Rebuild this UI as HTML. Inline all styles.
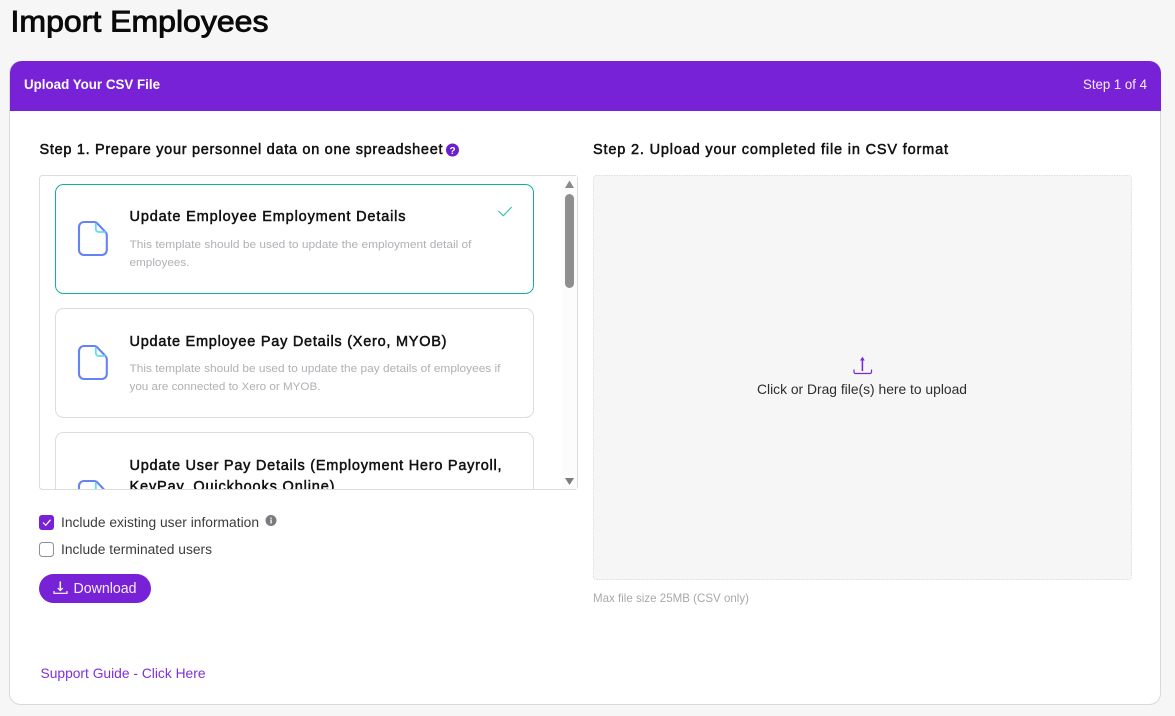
<!DOCTYPE html>
<html><head><meta charset="utf-8"><title>Import Employees</title>
<style>
html,body{margin:0;padding:0;width:1175px;height:716px;overflow:hidden;background:#f6f6f6}
svg{display:block;position:absolute;left:0;top:0}
text{font-family:"Liberation Sans",sans-serif;white-space:pre}
.h{font-size:14.5px;fill:#111;stroke:#111;stroke-width:.5px}
.d{font-size:11px;fill:#b0b0b6}
.l{font-size:13.5px;fill:#3c3c3c}
</style></head><body>
<svg width="1175" height="716" viewBox="0 0 1175 716" xmlns="http://www.w3.org/2000/svg">
<defs>
<clipPath id="list"><rect x="40" y="176" width="537" height="313"/></clipPath>
<symbol id="doc" viewBox="0 0 30 36" overflow="visible">
<path d="M6 1H16.500C17.500 1 18.300 1.400 19 2.100L27.600 11.200C28.400 12 28.800 13 28.800 14V29A5 5 0 0 1 23.800 34H6A5 5 0 0 1 1 29V6A5 5 0 0 1 6 1Z" fill="none" stroke="#6583f5" stroke-width="2.100"/>
<path d="M17.800 2.500V8A3 3 0 0 0 20.800 11H27.500" fill="none" stroke="#62dcf2" stroke-width="1.800"/>
</symbol>
</defs>
<text x="10.500" y="31.500" font-size="30" fill="#0a0a0a" stroke="#0a0a0a" stroke-width=".9" textLength="258" lengthAdjust="spacingAndGlyphs">Import Employees</text>

<rect x="9.500" y="61.500" width="1151" height="643" rx="11" fill="#fff" stroke="#d9d9d9"/>
<path d="M10 111V73A12 12 0 0 1 22 61H1149A12 12 0 0 1 1161 73V111Z" fill="#7822d7"/>
<text x="24" y="89" font-size="13.500" font-weight="700" fill="#fff" textLength="136" lengthAdjust="spacingAndGlyphs">Upload Your CSV File</text>
<text x="1083" y="89" font-size="14" fill="#f4edfd" textLength="64" lengthAdjust="spacingAndGlyphs">Step 1 of 4</text>

<text x="39.500" y="154" class="h" textLength="403" lengthAdjust="spacing">Step 1. Prepare your personnel data on one spreadsheet</text>
<circle cx="452.500" cy="150" r="6.500" fill="#6a1fd0"/>
<text x="452.500" y="154" font-size="10" font-weight="700" fill="#fff" text-anchor="middle">?</text>
<text x="593" y="154" class="h" textLength="355" lengthAdjust="spacing">Step 2. Upload your completed file in CSV format</text>

<rect x="39.500" y="175.500" width="538" height="314" rx="3" fill="#fff" stroke="#dcdcdc"/>
<g clip-path="url(#list)">
<rect x="562" y="176" width="15" height="313" fill="#fcfcfc"/>
<rect x="55.500" y="184.500" width="478" height="109" rx="8" fill="#fff" stroke="#10b09c"/>
<use href="#doc" x="78" y="221" width="30" height="36"/>
<text x="129.500" y="221" class="h" textLength="276" lengthAdjust="spacing">Update Employee Employment Details</text>
<text x="129.500" y="248" class="d" textLength="342" lengthAdjust="spacingAndGlyphs">This template should be used to update the employment detail of</text>
<text x="129.500" y="266" class="d" textLength="60" lengthAdjust="spacingAndGlyphs">employees.</text>
<path d="M498.300 211L503.300 215.700L511.700 207" fill="none" stroke="#2dc0aa" stroke-width="1.100"/>

<rect x="55.500" y="308.500" width="478" height="109" rx="8" fill="#fff" stroke="#dcdcdf"/>
<use href="#doc" x="78" y="345" width="30" height="36"/>
<text x="129.500" y="346" class="h" textLength="317" lengthAdjust="spacing">Update Employee Pay Details (Xero, MYOB)</text>
<text x="129.500" y="372" class="d" textLength="371" lengthAdjust="spacingAndGlyphs">This template should be used to update the pay details of employees if</text>
<text x="129.500" y="390" class="d" textLength="191" lengthAdjust="spacingAndGlyphs">you are connected to Xero or MYOB.</text>

<rect x="55.500" y="432.500" width="478" height="109" rx="8" fill="#fff" stroke="#dcdcdf"/>
<use href="#doc" x="78" y="480" width="30" height="36"/>
<text x="129.500" y="470" class="h" textLength="372" lengthAdjust="spacing">Update User Pay Details (Employment Hero Payroll,</text>
<text x="129.500" y="491" class="h" textLength="205" lengthAdjust="spacing">KeyPay, Quickbooks Online)</text>
</g>
<rect x="565" y="194" width="9" height="94" rx="4.500" fill="#8f8f8f"/>
<path d="M569.500 180.500L574 188H565Z" fill="#8a8a8a"/>
<path d="M565 478H574L569.500 485Z" fill="#7d7d7d"/>

<rect x="39" y="515" width="15" height="15" rx="3" fill="#7822d7"/>
<path d="M43 522.500L45.800 525.300L50.500 519.800" fill="none" stroke="#fff" stroke-width="1.200"/>
<text x="61" y="527" class="l" textLength="198" lengthAdjust="spacingAndGlyphs">Include existing user information</text>
<circle cx="271" cy="520.500" r="5.500" fill="#7b7b7f"/>
<rect x="270.400" y="519.500" width="1.300" height="4" fill="#fff"/><rect x="270.400" y="517.500" width="1.300" height="1.300" fill="#fff"/>
<rect x="39.500" y="542.500" width="14" height="14" rx="3" fill="#fff" stroke="#8f8f95"/>
<text x="61" y="554" class="l" textLength="151" lengthAdjust="spacingAndGlyphs">Include terminated users</text>

<rect x="39" y="574" width="112" height="29" rx="14.500" fill="#7822d7"/>
<path d="M60.300 581.500V590.500" fill="none" stroke="#fff" stroke-width="1.500"/>
<path d="M57.800 588L60.300 590.500L62.800 588M54 591V593.300H67V591" fill="none" stroke="#fff" stroke-width="1.200"/>
<text x="73.500" y="593" font-size="14.500" fill="#f5eefd" textLength="63" lengthAdjust="spacingAndGlyphs">Download</text>

<text x="40.500" y="678" font-size="14" fill="#7f30da" textLength="165" lengthAdjust="spacingAndGlyphs">Support Guide - Click Here</text>

<rect x="593.500" y="175.500" width="538" height="404" rx="3" fill="#f6f6f6" stroke="#dedede" stroke-dasharray="1.500 1"/>
<path d="M862.400 358V371" fill="none" stroke="#7c26db" stroke-width="1.500"/>
<path d="M860 360.500L862.400 356.800L864.800 360.500Z" fill="#7c26db"/>
<path d="M854 369.500V372A1.500 1.500 0 0 0 855.500 373.500H870A1.500 1.500 0 0 0 871.500 372V369.500" fill="none" stroke="#7c26db" stroke-width="1.200"/>
<text x="757" y="394" font-size="14" fill="#2e2e2e" textLength="210" lengthAdjust="spacingAndGlyphs">Click or Drag file(s) here to upload</text>
<text x="593" y="602" font-size="12" fill="#a9a9a9" textLength="156" lengthAdjust="spacingAndGlyphs">Max file size 25MB (CSV only)</text>
</svg>
</body></html>
